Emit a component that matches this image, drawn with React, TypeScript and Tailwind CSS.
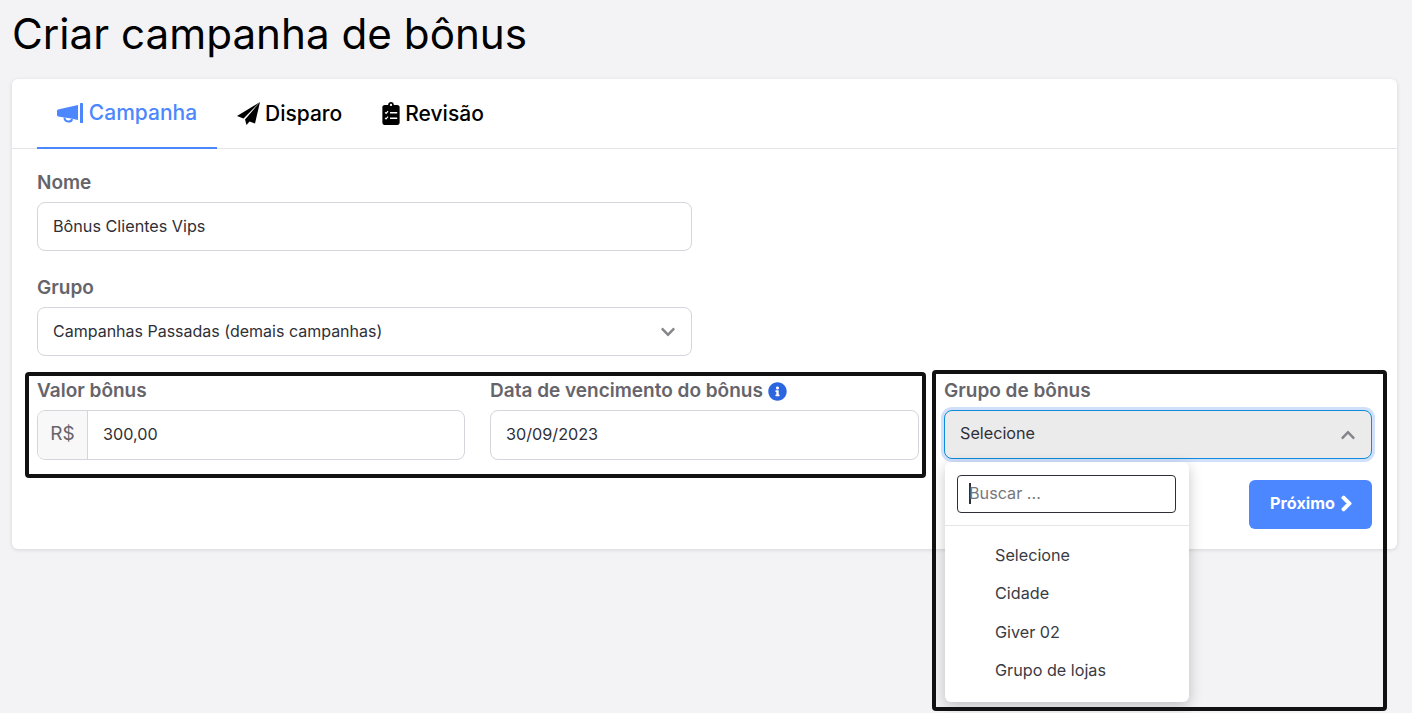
import { FaChevronRight, FaChevronDown, FaChevronUp, FaInfoCircle } from "react-icons/fa"

const FONT = "font-['Inter','Lato',sans-serif]"

function BullhornIcon() {
  return (
    <svg viewBox="0 0 27 22" className="w-[27px] h-[22px]" fill="currentColor">
      <path d="M0 8.500 L1 7.500 L21 3 V18 L14 16.500 L1 14.500 L0 13.500 Z" />
      <rect x="23" y="1" width="3" height="20" rx="0.500" />
      <path d="M7.500 15.500 C7.500 20.500 14.500 20.500 15 17" fill="none" stroke="currentColor" strokeWidth="2" />
    </svg>
  )
}

function PlaneIcon() {
  return (
    <svg viewBox="0 0 23 23" className="w-[23px] h-[23px]" fill="currentColor">
      <path d="M23 0 L0 14 L6.500 16.500 Z" />
      <path d="M23 0 L8 17.500 L9.500 23 L12.500 19.500 L18 21.500 Z" />
    </svg>
  )
}

function ClipboardIcon() {
  return (
    <svg viewBox="0 0 384 512" className="w-[18px] h-[23px]" fill="currentColor">
      <path d="M336 64h-80c0-35.300-28.700-64-64-64s-64 28.700-64 64H48C21.500 64 0 85.500 0 112v352c0 26.500 21.500 48 48 48h288c26.500 0 48-21.500 48-48V112c0-26.500-21.500-48-48-48zM192 40c13.300 0 24 10.700 24 24s-10.700 24-24 24-24-10.700-24-24 10.700-24 24-24z" />
      <path d="M60 232l22 22 44-48M60 352l22 22 44-48" fill="none" stroke="#fff" strokeWidth="26" />
      <path d="M170 240h160M170 360h160" fill="none" stroke="#fff" strokeWidth="34" />
    </svg>
  )
}

function Label({ children }: { children: React.ReactNode }) {
  return <div className="h-6 mb-[7px] text-[19px] leading-6 font-semibold text-[#66646b]">{children}</div>
}

function Field({ children, className = "" }: { children: React.ReactNode; className?: string }) {
  return (
    <div className={`flex items-center border border-[#d5d5dc] rounded-lg bg-white px-[15px] text-[#2f2f38] ${className}`}>
      {children}
    </div>
  )
}

const OPTIONS = ["Selecione", "Cidade", "Giver 02", "Grupo de lojas"]

export default function App() {
  return (
    <div className={`relative min-h-[713px] bg-[#f3f3f6] px-3 overflow-hidden ${FONT}`}>
      <h1 className="h-[79px] pt-[5px] text-[42.200px] leading-[58px] font-normal text-black">Criar campanha de bônus</h1>

      <div className="w-[1385px] bg-white rounded-md shadow-[0_1px_4px_rgba(0,0,0,0.12)]">
        {/* Tabs */}
        <div className="flex h-[70px] px-[25px] border-b border-[#e4e4e9]">
          <div className="flex items-center gap-[5px] w-[180px] justify-center h-[70px] border-b-2 border-[#4c87ff] text-[#4c87ff] text-[21px] font-medium">
            <BullhornIcon />
            Campanha
          </div>
          <div className="flex items-center gap-[5px] ml-5 text-black text-[21px] font-medium">
            <PlaneIcon />
            Disparo
          </div>
          <div className="flex items-center gap-[5px] ml-10 text-black text-[21px] font-medium">
            <ClipboardIcon />
            Revisão
          </div>
        </div>

        {/* Form */}
        <div className="pt-[22px] px-[25px] pb-5">
          <Label>Nome</Label>
          <Field className="w-[655px] h-[49px] text-[16.200px]">Bônus Clientes Vips</Field>

          <div className="mt-[25px]">
            <Label>Grupo</Label>
            <Field className="w-[655px] h-[49px] pb-[2px] justify-between text-[16px]">
              Campanhas Passadas (demais campanhas)
              <FaChevronDown className="w-4 h-4 mt-[2px] text-[#85858c]" />
            </Field>
          </div>

          <div className="mt-[23px] grid grid-cols-[428px_429px_428px] gap-x-[25px]">
            <div>
              <Label>Valor bônus</Label>
              <div className="flex h-[50px] border border-[#d5d5dc] rounded-lg text-[16.200px] overflow-hidden">
                <div className="w-[50px] shrink-0 flex items-center justify-center pb-[2px] bg-[#f8f8f8] border-r border-[#d5d5dc] text-[19px] text-[#66646b]">R$</div>
                <div className="flex items-center pl-[15px] pb-[2px] text-[#2f2f38]">300,00</div>
              </div>
            </div>
            <div>
              <Label>
                <span className="flex items-center gap-[5px]">
                  Data de vencimento do bônus
                  <FaInfoCircle className="w-[19px] h-[19px] text-[#2b66e0]" />
                </span>
              </Label>
              <Field className="h-[50px] pb-[2px] text-[16.200px]">30/09/2023</Field>
            </div>
            <div className="relative">
              <Label>Grupo de bônus</Label>
              <div className="flex items-center justify-between h-[49px] px-[15px] pb-[2px] rounded-lg bg-[#ebebeb] border border-[#0d8bdc] shadow-[0_0_0_3px_#d0e0fb] text-[16.200px] text-[#2f2f38]">
                Selecione
                <FaChevronUp className="w-4 h-4 mt-[2px] text-[#85858c]" />
              </div>

              {/* Dropdown */}
              <div className="absolute z-10 left-px top-[83px] w-[244px] h-[240px] bg-white rounded-md shadow-[0_4px_14px_rgba(0,0,0,0.22)]">
                <div className="h-[64px] border-b border-[#e4e4e9] pt-[12.500px] pl-3 pr-[13px]">
                  <div className="h-[38px] flex items-center pl-[11px] border border-[#2f2f38] rounded text-[16.200px] text-[#77777d]">
                    <span className="w-[2px] h-[21px] bg-[#2f2f38] -mr-[2px]" />
                    Buscar ...
                  </div>
                </div>
                <div className="pt-[9.500px]">
                  {OPTIONS.map(o => (
                    <div key={o} className="h-[38.500px] flex items-center pl-[50px] text-[16.200px] text-[#3a3a44]">{o}</div>
                  ))}
                </div>
              </div>
            </div>
          </div>

          <div className="mt-5 flex justify-end">
            <button className="flex items-center gap-[5px] justify-center w-[123px] h-[49px] pb-[3px] pl-[2px] rounded-md bg-[#4c87ff] text-white text-[16.200px] font-bold">
              Próximo
              <FaChevronRight className="w-[13px] h-[17px]" stroke="currentColor" strokeWidth={40} />
            </button>
          </div>
        </div>
      </div>

      {/* Annotation frames drawn over the screenshot */}
      <div className="absolute left-[25px] top-[372px] w-[901px] h-[106px] border-4 border-[#111] rounded-sm pointer-events-none" />
      <div className="absolute z-20 left-[932px] top-[370px] w-[455px] h-[341px] border-4 border-[#111] rounded-sm pointer-events-none" />
    </div>
  )
}
